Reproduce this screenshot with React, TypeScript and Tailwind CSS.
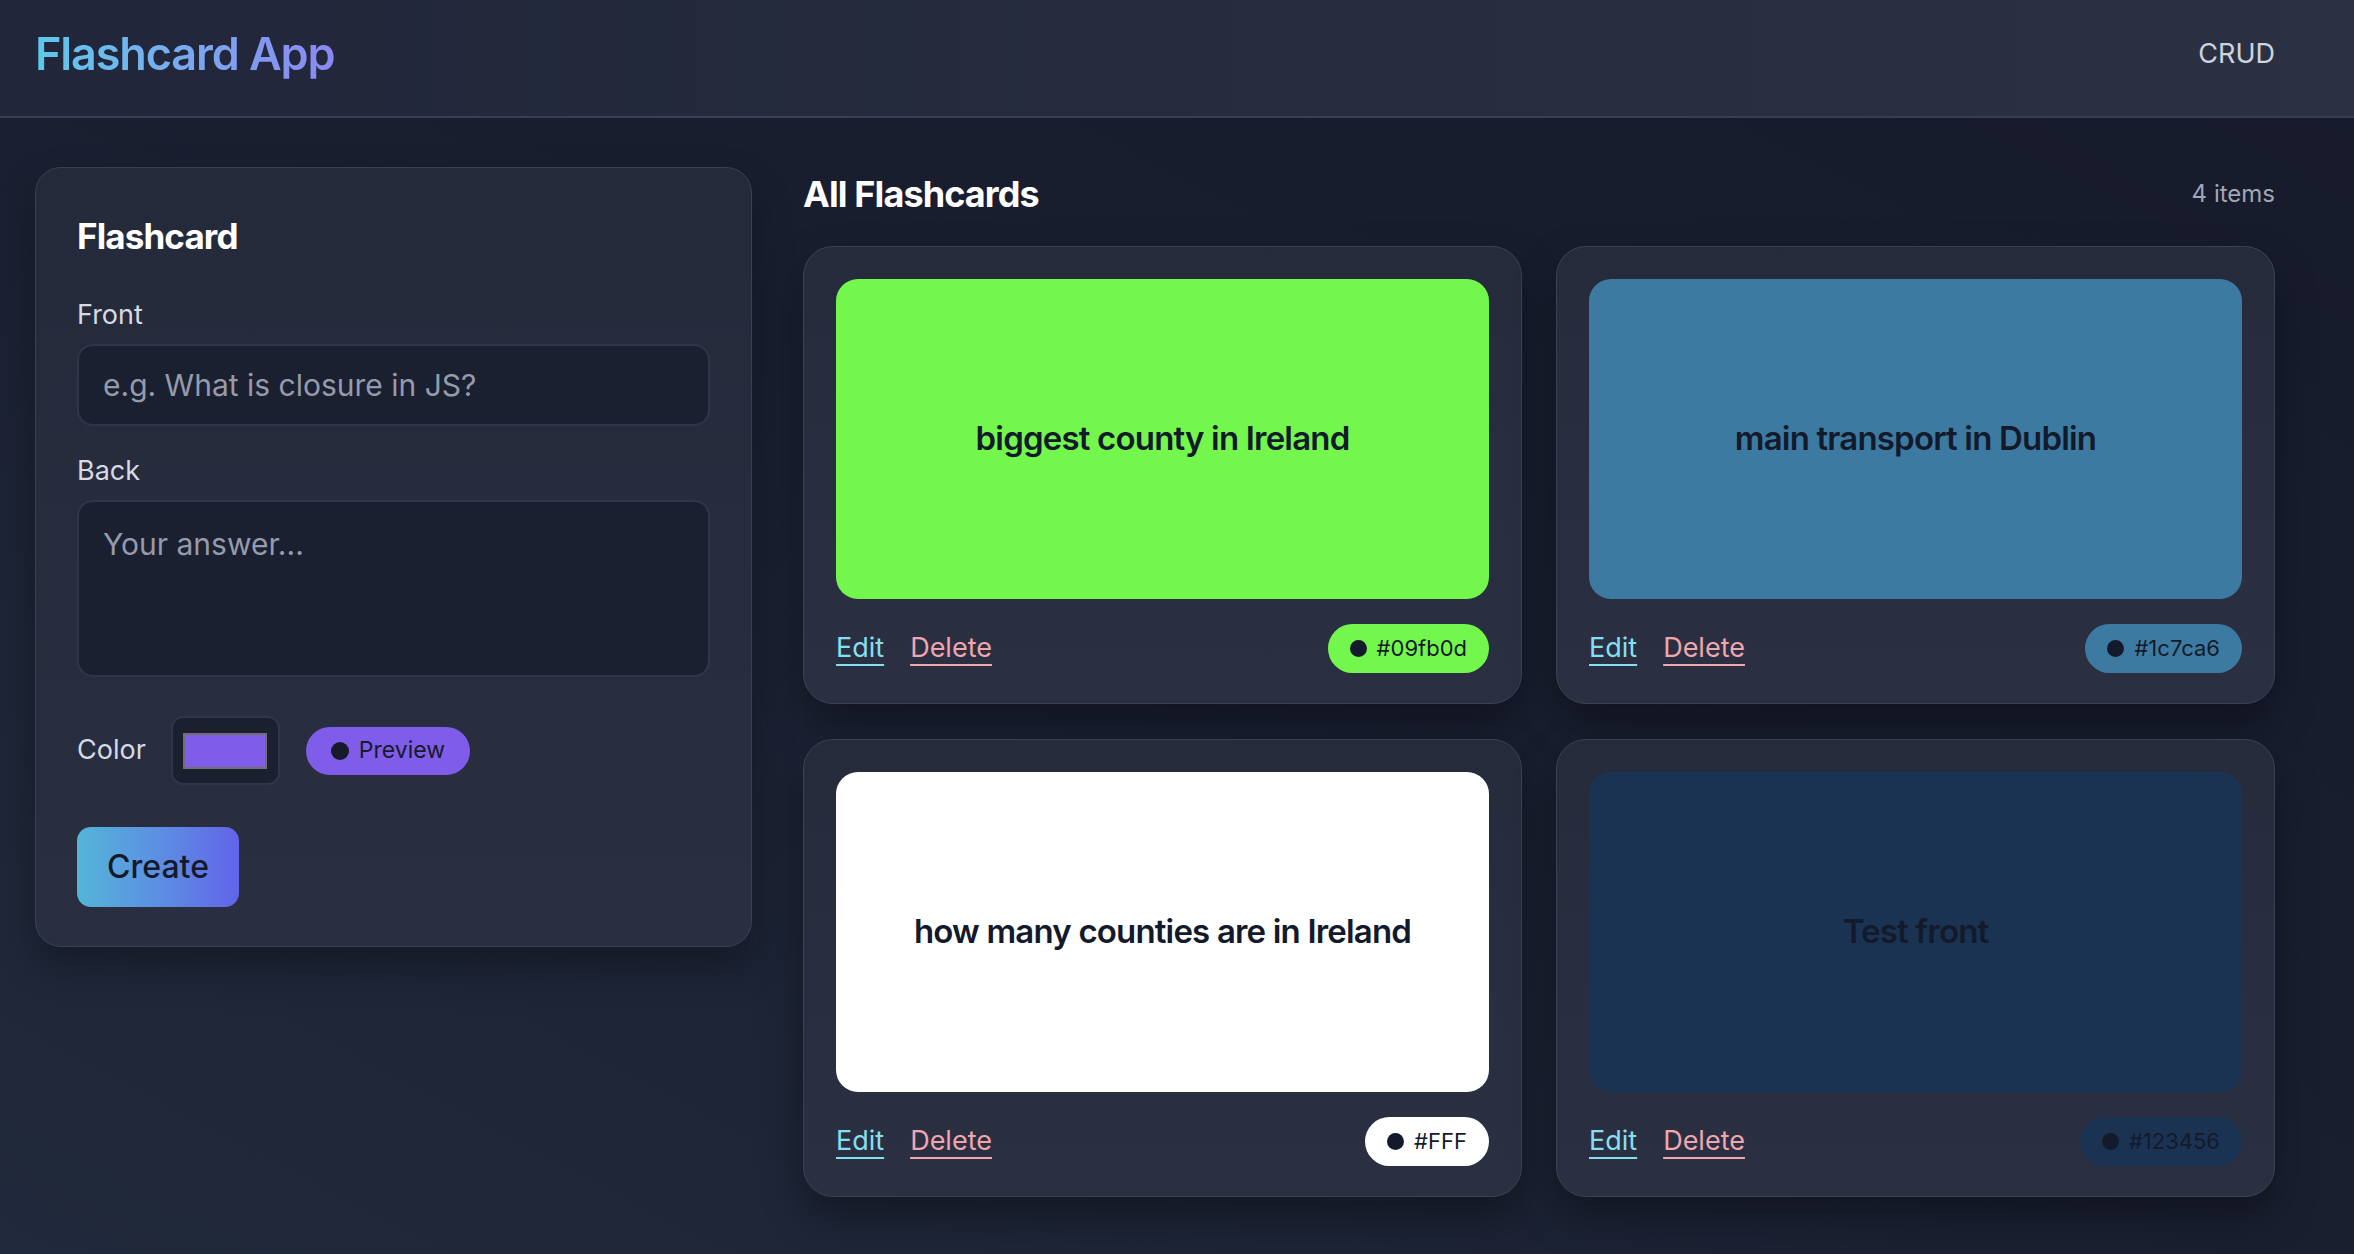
import type { ReactNode } from "react";

type Card = { front: string; color: string; face: string; label: string };

const cards: Card[] = [
  { front: "biggest county in Ireland", color: "#09fb0d", face: "bg-[#74f74d]", label: "#09fb0d" },
  { front: "main transport in Dublin", color: "#1c7ca6", face: "bg-[#3d7aa1]", label: "#1c7ca6" },
  { front: "how many counties are in Ireland", color: "#FFF", face: "bg-white", label: "#FFF" },
  { front: "Test front", color: "#123456", face: "bg-[#1b3352]", label: "#123456" },
];

function Label({ children }: { children: ReactNode }) {
  return <label className="block text-[27px] leading-[32px] text-[#d6dae3]">{children}</label>;
}

function FlashcardTile({ card }: { card: Card }) {
  return (
    <div className="rounded-[30px] border border-[#3b4153] bg-gradient-to-b from-[#262b3c] to-[#2a3042] px-[32px] pt-[32px] pb-[30px] shadow-[0_20px_40px_rgba(0,0,0,0.35)]">
      <div className={`flex h-[320px] items-center justify-center rounded-[22px] px-6 text-center ${card.face}`}>
        <p className="text-[33px] font-semibold tracking-tight text-[#131a2b]">{card.front}</p>
      </div>
      <div className="mt-[25px] flex h-[49px] items-center justify-between">
        <div className="flex items-center gap-[26px] text-[27px]">
          <button className="text-[#86dff0] underline decoration-2 underline-offset-[7px]">Edit</button>
          <button className="text-[#f0a6ae] underline decoration-2 underline-offset-[7px]">Delete</button>
        </div>
        <span className={`flex h-[49px] items-center gap-[10px] rounded-full px-[22px] text-[22px] text-[#131a2b] ${card.face}`}>
          <span className="h-[17px] w-[17px] rounded-full bg-[#131a2b]" />
          {card.label}
        </span>
      </div>
    </div>
  );
}

export default function App() {
  return (
    <div className="min-h-screen bg-gradient-to-tr from-[#212a3c] via-[#1a1f30] to-[#161a2b] font-['Inter',sans-serif] text-white">
      {/* Header */}
      <header className="flex h-[118px] items-center justify-between border-b-2 border-[#3a3f4f] bg-gradient-to-r from-[#21263a] to-[#2b3142] pb-[8px] pl-[35px] pr-[79px]">
        <h1 className="bg-gradient-to-r from-[#5cc9ea] to-[#8a88f2] bg-clip-text text-[45px] font-semibold tracking-tight text-transparent">
          Flashcard App
        </h1>
        <span className="text-[27px] text-[#cdd3df]">CRUD</span>
      </header>

      <main className="flex items-start gap-[51px] pl-[35px] pr-[79px] pt-[49px] pb-[56px]">
        {/* Form */}
        <section className="w-[717px] shrink-0 rounded-[26px] border border-[#3a4051] bg-gradient-to-b from-[#252a3b] to-[#292f40] px-[41px] pt-[48px] pb-[39px] shadow-[0_20px_40px_rgba(0,0,0,0.3)]">
          <h2 className="text-[35px] font-bold leading-[40px] tracking-tight text-white">Flashcard</h2>

          <div className="mt-[43px]">
            <Label>Front</Label>
            <input
              placeholder="e.g. What is closure in JS?"
              className="mt-[13px] h-[82px] w-full rounded-[16px] border-2 border-[#30364a] bg-[#1b2031] px-[24px] text-[30px] text-white outline-none placeholder:text-[#959bab]"
            />
          </div>

          <div className="mt-[29px]">
            <Label>Back</Label>
            <textarea
              placeholder="Your answer..."
              className="mt-[13px] block h-[177px] w-full resize-none rounded-[16px] border-2 border-[#30364a] bg-[#1b2031] px-[24px] py-[20px] text-[30px] text-white outline-none placeholder:text-[#959bab]"
            />
          </div>

          <div className="mt-[39px] flex items-center">
            <span className="text-[27px] text-[#d6dae3]">Color</span>
            <div className="ml-[25px] flex h-[69px] w-[109px] items-center justify-center rounded-[12px] border-2 border-[#30364a] bg-[#1b2031]">
              <div className="h-[36px] w-[84px] border-2 border-[#6f6f72] bg-[#7f5cea]" />
            </div>
            <span className="ml-[26px] flex h-[48px] items-center gap-[10px] rounded-full bg-[#7f5cea] px-[25px] text-[23px] text-[#161a2b]">
              <span className="h-[18px] w-[18px] rounded-full bg-[#161a2b]" />
              Preview
            </span>
          </div>

          <button className="mt-[42px] h-[80px] w-[162px] rounded-[14px] bg-gradient-to-r from-[#53b5d8] to-[#6263e9] text-[32px] font-medium text-[#141a2c]">
            Create
          </button>
        </section>

        {/* List */}
        <section className="flex-1">
          <div className="flex h-[54px] items-center justify-between">
            <h2 className="text-[36px] font-bold tracking-tight text-white">All Flashcards</h2>
            <span className="text-[24px] text-[#a1a7b4]">{cards.length} items</span>
          </div>
          <div className="mt-[25px] grid grid-cols-2 gap-x-[34px] gap-y-[35px]">
            {cards.map((c) => (
              <FlashcardTile key={c.front} card={c} />
            ))}
          </div>
        </section>
      </main>
    </div>
  );
}
